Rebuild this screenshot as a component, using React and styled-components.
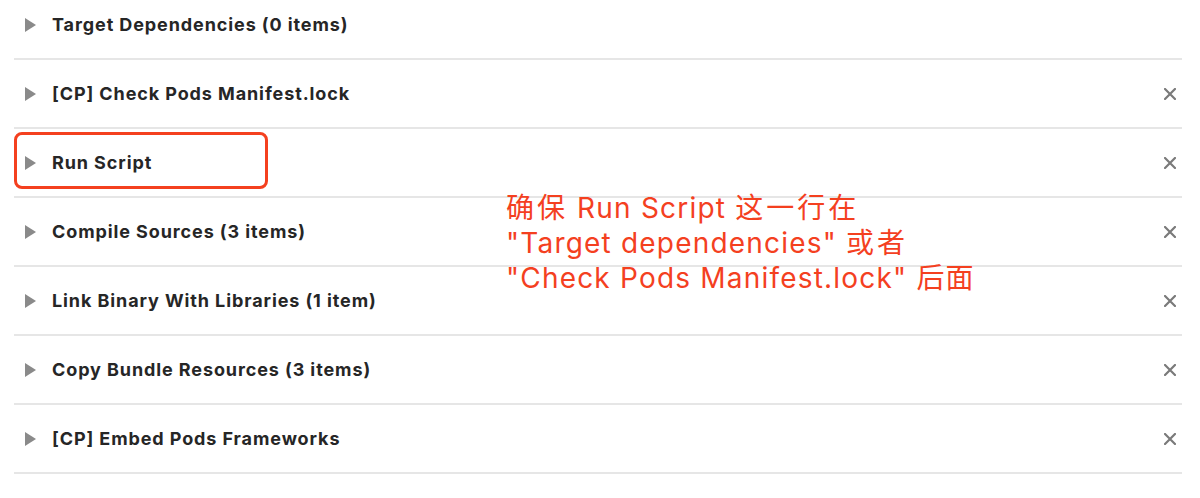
import React from 'react';
import styled, { createGlobalStyle } from 'styled-components';

const GlobalStyle = createGlobalStyle`
    html, body {
        margin: 0;
        padding: 0;
        background: #fff;
        overflow: hidden;
    }
    body {
        font-family: Inter, "Noto Sans CJK SC", sans-serif;
    }
`

const Page = styled.div`
    position: relative;
    width: 1200px;
    height: 498px;
    overflow: hidden;
`

const List = styled.div`
    margin-top: -9px;
    padding: 0 18px 0 14px;
`

const Row = styled.div`
    height: 67px;
    display: flex;
    align-items: center;
    border-bottom: 2px solid #e6e6e6;
`

const Arrow = styled.span`
    width: 0;
    height: 0;
    margin: 0 16px 0 11px;
    border-top: 7px solid transparent;
    border-bottom: 7px solid transparent;
    border-left: 11px solid #8a8a8a;
`

const Title = styled.span`
    flex: 1;
    font-family: Inter, "Noto Sans CJK SC", sans-serif;
    font-size: 18px;
    font-weight: 700;
    color: #262626;
    letter-spacing: 0.9px;
`

const Remove = styled.span`
    display: flex;
    margin-right: 6px;
`

const Highlight = styled.div`
    position: absolute;
    left: 14px;
    top: 132px;
    width: 248px;
    height: 51px;
    border: 3px solid #f4401f;
    border-radius: 8px;
`

const Note = styled.div`
    position: absolute;
    left: 506px;
    top: 191px;
    font-family: Inter, "Noto Sans CJK SC", sans-serif;
    font-size: 28px;
    line-height: 35px;
    letter-spacing: 1.2px;
    color: #f4401f;
`

const Cjk = styled.span`
    letter-spacing: 3px;
`

const CloseIcon = () => (
    <svg width="12" height="12" viewBox="0 0 12 12">
        <path d="M1 1 L11 11 M11 1 L1 11" stroke="#7a7a7a" strokeWidth="2.2" strokeLinecap="square" />
    </svg>
)

const phases = [
    { title: 'Target Dependencies (0 items)', removable: false },
    { title: '[CP] Check Pods Manifest.lock', removable: true },
    { title: 'Run Script', removable: true },
    { title: 'Compile Sources (3 items)', removable: true },
    { title: 'Link Binary With Libraries (1 item)', removable: true },
    { title: 'Copy Bundle Resources (3 items)', removable: true },
    { title: '[CP] Embed Pods Frameworks', removable: true },
]

const App = () => {
    return (
        <Page>
            <GlobalStyle />
            <List>
                {phases.map((p) => (
                    <Row key={p.title}>
                        <Arrow />
                        <Title>{p.title}</Title>
                        {p.removable && <Remove><CloseIcon /></Remove>}
                    </Row>
                ))}
            </List>
            <Highlight />
            <Note>
                <Cjk>确保</Cjk> Run Script <Cjk>这一行在</Cjk><br />
                "Target dependencies" <Cjk>或者</Cjk><br />
                "Check Pods Manifest.lock" 后面
            </Note>
        </Page>
    )
}

export default App;
